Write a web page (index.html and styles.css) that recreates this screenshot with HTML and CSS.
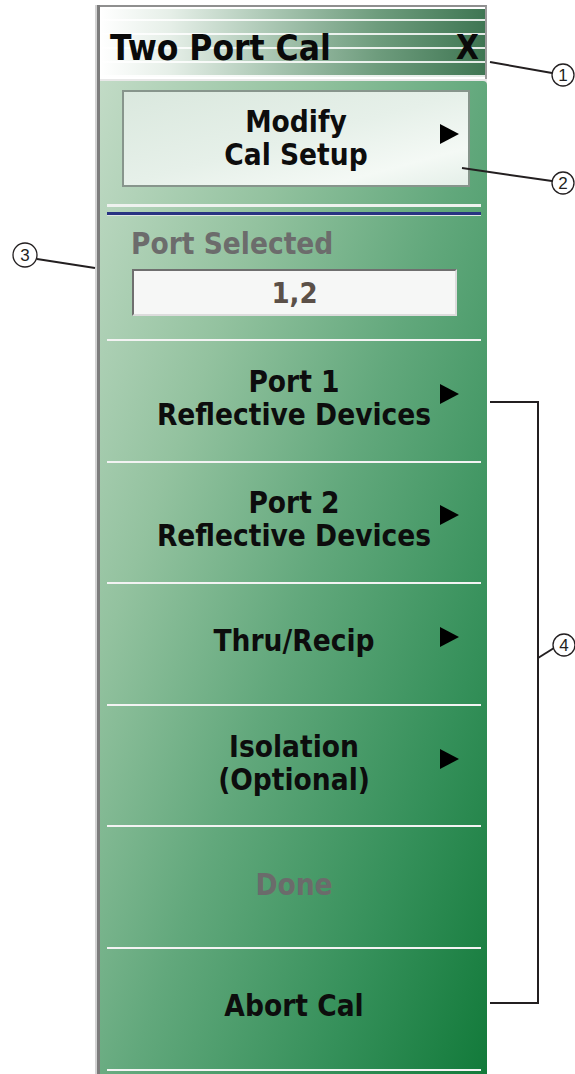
FILE: index.html
```html
<!DOCTYPE html>
<html lang="en">
<head>
  <meta charset="UTF-8" />
  <title>Two Port Cal</title>
  <meta name="viewport" content="width=device-width, initial-scale=1">
  <link rel="stylesheet" href="styles.css">
</head>
<body>
  <div class="page">
    <div class="panel">
      <div class="title-bar">
        <span class="title">Two Port Cal</span>
        <span class="close">X</span>
      </div>

      <div class="menu">
        <div class="btn-setup">
          <span></span>
          <span class="label">Modify<br>Cal Setup</span>
          <span class="arrow"></span>
        </div>

        <div class="divider"></div>

        <div class="port-sel">
          <div class="port-label">Port Selected</div>
          <div class="port-field">1,2</div>
        </div>

        <div class="item">
          <span></span>
          <span class="label">Port 1<br>Reflective Devices</span>
          <span class="arrow"></span>
        </div>
        <div class="item">
          <span></span>
          <span class="label">Port 2<br>Reflective Devices</span>
          <span class="arrow"></span>
        </div>
        <div class="item">
          <span></span>
          <span class="label">Thru/Recip</span>
          <span class="arrow"></span>
        </div>
        <div class="item">
          <span></span>
          <span class="label">Isolation<br>(Optional)</span>
          <span class="arrow"></span>
        </div>
        <div class="item">
          <span></span>
          <span class="label disabled">Done</span>
          <span></span>
        </div>
        <div class="item">
          <span></span>
          <span class="label">Abort Cal</span>
          <span></span>
        </div>
        <div class="item"></div>
      </div>
    </div>

    <!-- callout annotations -->
    <svg class="callouts" width="575" height="1074" viewBox="0 0 575 1074">
      <g stroke="#231f20" stroke-width="2" fill="none">
        <line x1="490" y1="62" x2="552" y2="73" />
        <line x1="462" y1="168" x2="552" y2="181" />
        <line x1="37" y1="259" x2="95" y2="268" />
        <polyline points="490,402 538,402 538,1003 490,1003" />
        <line x1="538" y1="658" x2="554" y2="648" />
      </g>
      <g stroke="#231f20" stroke-width="1.3" fill="#fff">
        <circle cx="563" cy="75" r="11" />
        <circle cx="563" cy="183" r="11" />
        <circle cx="25" cy="255" r="12" />
        <circle cx="564" cy="645" r="11" />
      </g>
      <g class="num" text-anchor="middle">
        <text x="563" y="81">1</text>
        <text x="563" y="189">2</text>
        <text x="25" y="261">3</text>
        <text x="564" y="651">4</text>
      </g>
    </svg>
  </div>
</body>
</html>
```

FILE: styles.css
```css
html, body {
  margin: 0;
  padding: 0;
  background: #fff;
}
.page {
  position: relative;
  width: 575px;
  height: 1074px;
  overflow: hidden;
  font-family: "DejaVu Sans Condensed", "DejaVu Sans", sans-serif;
  font-stretch: condensed;
  font-weight: bold;
}
.panel {
  margin-left: 97px;
  width: 387px;
  height: 1074px;
  border-left: 3px solid #7c7c7c;
  box-shadow: -2px 0 0 #d4d4d4;
  background: #e8e8e8;
}
.title-bar {
  display: flex;
  align-items: center;
  justify-content: space-between;
  margin-top: 5px;
  height: 74px;
  box-sizing: border-box;
  padding: 9px 6px 0 10px;
  border-top: 2px solid #8f8f8f;
  border-right: 2px solid #9a9a9a;
  box-shadow: inset 2px 2px 0 #fff, inset 0 -2px 0 #fff;
  background:
    repeating-linear-gradient(to bottom, transparent 0 12px, rgba(255,255,255,0.85) 12px 14px),
    linear-gradient(to right, #ffffff 0%, #e6efe8 18%, #a9c6b2 45%, #6e9c7d 72%, #3f7653 100%);
  color: #0a0a0a;
  font-size: 35px;
}
.close {
  font-size: 33px;
}
.menu {
  margin-top: 2px;
  height: 996px;
  overflow: hidden;
  border-top-right-radius: 4px;
  background: linear-gradient(110deg, #c2dbc6 0%, #93c29f 28%, #62a87c 52%, #35905a 78%, #127a3a 100%);
}
.btn-setup,
.item {
  display: grid;
  grid-template-columns: 1fr auto 1fr;
  align-items: center;
  text-align: center;
  color: #0d0d0d;
  font-size: 29.5px;
  line-height: 33px;
}
.btn-setup {
  margin: 9px 17px 0 22px;
  height: 97px;
  box-sizing: border-box;
  border: 2px solid #87958c;
  background: linear-gradient(165deg, #dae8de 0%, #e6f0e9 50%, #f4f9f5 80%, #e4efe8 100%);
}
.btn-setup .arrow {
  margin-right: 9px;
}
.arrow {
  justify-self: end;
  margin-right: 22px;
  margin-bottom: 10px;
  width: 0;
  height: 0;
  border-top: 10px solid transparent;
  border-bottom: 10px solid transparent;
  border-left: 19px solid #000;
}
.divider {
  margin: 17px 6px 0 7px;
  height: 5px;
  border-top: 3px solid #eef2ef;
  border-bottom: 3px solid #283382;
  box-shadow: 0 1px 0 #dfe6e0;
}
.port-sel {
  padding: 12px 30px 0 32px;
  height: 124px;
  box-sizing: border-box;
}
.port-label {
  margin-left: -1px;
  font-size: 29.5px;
  line-height: 34px;
  color: #6c6c6c;
}
.port-field {
  margin-top: 8px;
  height: 47px;
  box-sizing: border-box;
  display: flex;
  align-items: center;
  justify-content: center;
  background: #f6f7f6;
  border: 2px solid #dcdcdc;
  border-top-color: #6f6f6f;
  border-left-color: #6f6f6f;
  font-size: 29px;
  color: #5b5048;
}
.item {
  margin: 0 6px 0 7px;
  height: 121.6px;
  box-sizing: border-box;
  border-top: 2px solid #f3f3f3;
  padding-bottom: 4px;
}
.label.disabled {
  color: #6b6b6b;
}
.callouts {
  position: absolute;
  top: 0;
  left: 0;
  pointer-events: none;
}
.num text {
  font-family: "Liberation Sans", Arial, sans-serif;
  font-weight: normal;
  font-size: 17px;
  fill: #231f20;
}
```
